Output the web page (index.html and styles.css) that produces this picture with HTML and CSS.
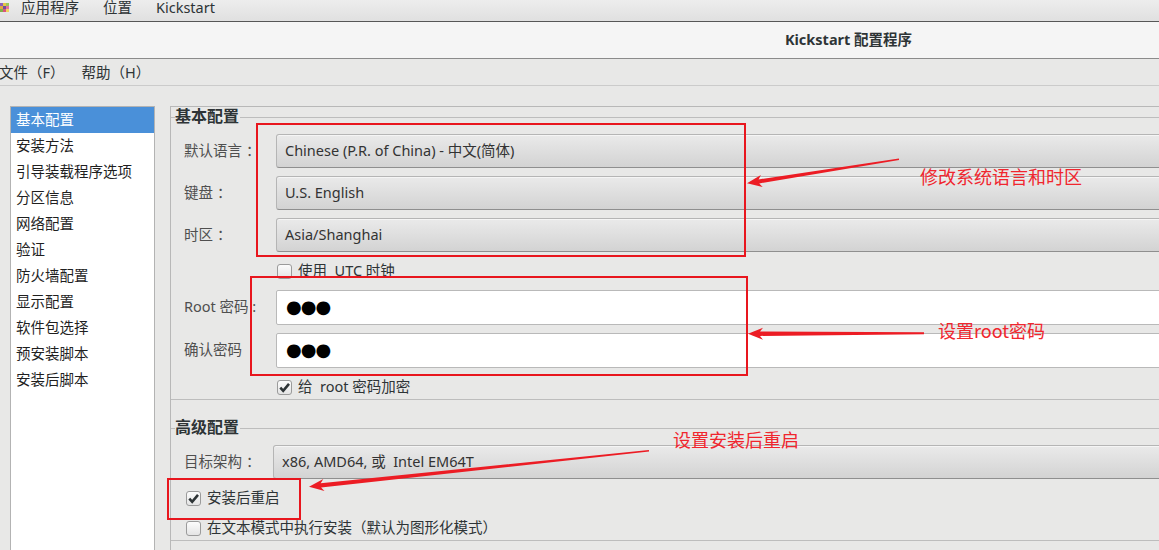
FILE: index.html
```html
<!DOCTYPE html>
<html lang="zh-CN">
<head>
    <meta charset="UTF-8">
    <title>Kickstart 配置程序</title>
    <link rel="stylesheet" href="styles.css">
</head>
<body>
    <div class="panel">
        <span class="panel-logo">
            <svg width="9" height="14" viewBox="0 0 9 14">
                <rect x="0" y="3" width="3" height="3" fill="#8e5fb8"/>
                <rect x="3" y="3" width="3" height="3" fill="#e5c446"/>
                <rect x="6" y="3" width="3" height="3" fill="#9bc65a"/>
                <rect x="0" y="6" width="3" height="3" fill="#e2a341"/>
                <rect x="3" y="6" width="3" height="3" fill="#6b4e9b"/>
                <rect x="6" y="6" width="3" height="3" fill="#e56f9e"/>
                <rect x="0" y="9" width="3" height="3" fill="#7fb04a"/>
                <rect x="3" y="9" width="3" height="3" fill="#d9527e"/>
                <rect x="6" y="9" width="3" height="3" fill="#f0d35e"/>
            </svg>
        </span>
        <span class="panel-item">应用程序</span>
        <span class="panel-item">位置</span>
        <span class="panel-item">Kickstart</span>
    </div>

    <div class="window">
        <div class="titlebar">Kickstart 配置程序</div>
        <div class="menubar">
            <span>文件（F）</span>
            <span>帮助（H）</span>
        </div>
        <div class="main">
            <ul class="sidebar">
                <li class="active">基本配置</li>
                <li>安装方法</li>
                <li>引导装载程序选项</li>
                <li>分区信息</li>
                <li>网络配置</li>
                <li>验证</li>
                <li>防火墙配置</li>
                <li>显示配置</li>
                <li>软件包选择</li>
                <li>预安装脚本</li>
                <li>安装后脚本</li>
            </ul>
            <div class="pane">
                <fieldset class="frame">
                    <legend>基本配置</legend>
                    <div class="form form-basic">
                        <label>默认语言<span class="colon">：</span></label>
                        <div class="combo">Chinese (P.R. of China) - 中文(简体)</div>
                        <label>键盘<span class="colon">：</span></label>
                        <div class="combo">U.S. English</div>
                        <label>时区<span class="colon">：</span></label>
                        <div class="combo">Asia/Shanghai</div>
                        <span></span>
                        <div class="check check-field"><span class="box"></span><span class="check-text">使用&nbsp; UTC 时钟</span></div>
                        <label>Root 密码 :</label>
                        <div class="secret">●●●</div>
                        <label>确认密码</label>
                        <div class="secret">●●●</div>
                        <span></span>
                        <div class="check check-field">
                            <span class="box"><svg width="13" height="13" viewBox="0 0 13 13"><path d="M2.3 6.6 L5.2 9.8 L11 2.9" fill="none" stroke="#2e3436" stroke-width="2.6"/></svg></span><span class="check-text">给&nbsp; root 密码加密</span>
                        </div>
                    </div>
                </fieldset>
                <fieldset class="frame frame-advanced">
                    <legend>高级配置</legend>
                    <div class="form form-advanced">
                        <label>目标架构<span class="colon">：</span></label>
                        <div class="combo">x86, AMD64, 或&nbsp; Intel EM64T</div>
                        <div class="check check-row">
                            <span class="box"><svg width="13" height="13" viewBox="0 0 13 13"><path d="M2.3 6.6 L5.2 9.8 L11 2.9" fill="none" stroke="#2e3436" stroke-width="2.6"/></svg></span><span class="check-text">安装后重启</span>
                        </div>
                        <div class="check check-row"><span class="box"></span><span class="check-text">在文本模式中执行安装（默认为图形化模式）</span></div>
                    </div>
                </fieldset>
            </div>
        </div>
    </div>

    <svg class="marks" width="1159" height="550" viewBox="0 0 1159 550">
        <g fill="none" stroke="#e8161e" stroke-width="2">
            <rect x="257" y="124" width="488" height="132"/>
            <rect x="251" y="277" width="496" height="98"/>
            <rect x="168" y="479" width="132" height="40"/>
        </g>
        <g fill="#ec1c24">
            <polygon points="898.9,158.5 758.6,179.4 760.9,175.1 747,183.3 762.7,186.9 759.2,183.4 899.1,160.1"/>
            <polygon points="924,332.3 760,331.5 763,327.7 748,333.7 763,339.7 760,335.9 924,334.3"/>
            <polygon points="648.9,449.9 320.7,483.2 323.3,479.1 309,486.7 324.5,491.1 321.1,487.6 649.1,451.5"/>
        </g>
    </svg>
    <div class="note note-lang">修改系统语言和时区</div>
    <div class="note note-root">设置root密码</div>
    <div class="note note-reboot">设置安装后重启</div>
</body>
</html>
```

FILE: styles.css
```css
html, body {
    margin: 0;
    overflow: hidden;
}
body {
    position: relative;
    width: 1159px;
    height: 550px;
    background: #e8e8e7;
    font-family: "Noto Sans", "Noto Sans CJK SC", sans-serif;
    font-size: 14.5px;
    color: #2e3436;
}
.panel {
    height: 21px;
    border-bottom: 1px solid #575757;
    background: linear-gradient(#ededed, #e0e0e0);
    display: flex;
    align-items: flex-start;
    line-height: 15px;
}
.panel-logo {
    width: 9px;
    height: 14px;
    margin-right: 12px;
}
.panel-item {
    margin-right: 24px;
}
.window {
    width: 1697px;
}
.titlebar {
    height: 36px;
    line-height: 34px;
    text-align: center;
    font-weight: bold;
    background: #f5f5f5;
    border-bottom: 1px solid #8b8b8b;
}
.menubar {
    height: 27px;
    box-sizing: border-box;
    padding-bottom: 2px;
    display: flex;
    align-items: center;
    border-bottom: 1px solid #cbcbcb;
}
.menubar span {
    margin-left: -1px;
    margin-right: 18px;
}
.main {
    display: flex;
    align-items: flex-start;
    padding-top: 20px;
}
.sidebar {
    list-style: none;
    margin: 0 0 0 10px;
    padding: 0;
    width: 143px;
    height: 470px;
    background: #fff;
    border: 1px solid #b3b3b3;
    color: #1f1f1f;
}
.sidebar li {
    height: 26px;
    box-sizing: border-box;
    line-height: 24px;
    padding: 0 0 2px 5px;
}
.sidebar .active {
    background: #4a90d9;
    color: #fff;
}
.pane {
    flex: 1;
    height: 470px;
    margin-left: 15px;
    border-left: 1px solid #b8b8b8;
    border-top: 1px solid #b8b8b8;
}
.frame {
    margin: 0;
    min-width: 0;
    padding: 7px 0 1px 4px;
    border: none;
    border-top: 1px solid #bdbdbd;
    border-bottom: 1px solid #bdbdbd;
}
.frame legend {
    padding: 0 1px 2px 0;
    font-size: 16px;
    font-weight: bold;
    line-height: 18px;
}
.frame-advanced {
    margin-top: 18px;
}
.form {
    display: grid;
    row-gap: 8px;
    align-items: center;
    padding-left: 9px;
}
.form-basic {
    grid-template-columns: 92px 1fr;
}
.form-advanced {
    grid-template-columns: 89px 1fr;
}
.form label {
    padding-bottom: 4px;
    color: #4f4f4f;
    white-space: nowrap;
}
.colon {
    margin-left: 4px;
    font-family: "Noto Sans CJK TC", sans-serif;
}
.combo {
    height: 34px;
    box-sizing: border-box;
    display: flex;
    align-items: center;
    padding: 0 0 3px 8px;
    border: 1px solid #b5b5b5;
    border-bottom-color: #8f8f8f;
    border-radius: 3px;
    background: linear-gradient(#eaeaea, #d3d3d3);
    box-shadow: inset 0 1px #f5f5f5;
    color: #333;
}
.secret {
    height: 35px;
    box-sizing: border-box;
    display: flex;
    align-items: center;
    padding: 0 0 3px 9px;
    border: 1px solid #b9b9b9;
    border-radius: 2px;
    background: #fff;
    color: #000;
    font-family: "DejaVu Sans", sans-serif;
    font-size: 18px;
    letter-spacing: -1px;
}
.check {
    height: 22px;
    display: flex;
    align-items: center;
    gap: 6px;
}
.check-text {
    padding-bottom: 4px;
}
.check-field {
    margin-left: 1px;
}
.check-row {
    grid-column: 1 / -1;
    margin-left: 2px;
}
.box {
    width: 15px;
    height: 15px;
    box-sizing: border-box;
    display: flex;
    align-items: center;
    justify-content: center;
    border: 1px solid #9b9b9b;
    border-radius: 3px;
    background: linear-gradient(#fcfcfc, #e4e4e4);
}
.marks {
    position: absolute;
    top: 0;
    left: 0;
    pointer-events: none;
}
.note {
    position: absolute;
    color: #f0262e;
    font-family: "Noto Sans CJK SC", sans-serif;
    font-size: 18px;
    line-height: 24px;
    white-space: nowrap;
}
.note-lang {
    left: 920px;
    top: 164px;
}
.note-root {
    left: 938px;
    top: 318px;
}
.note-reboot {
    left: 673px;
    top: 427px;
}
```
